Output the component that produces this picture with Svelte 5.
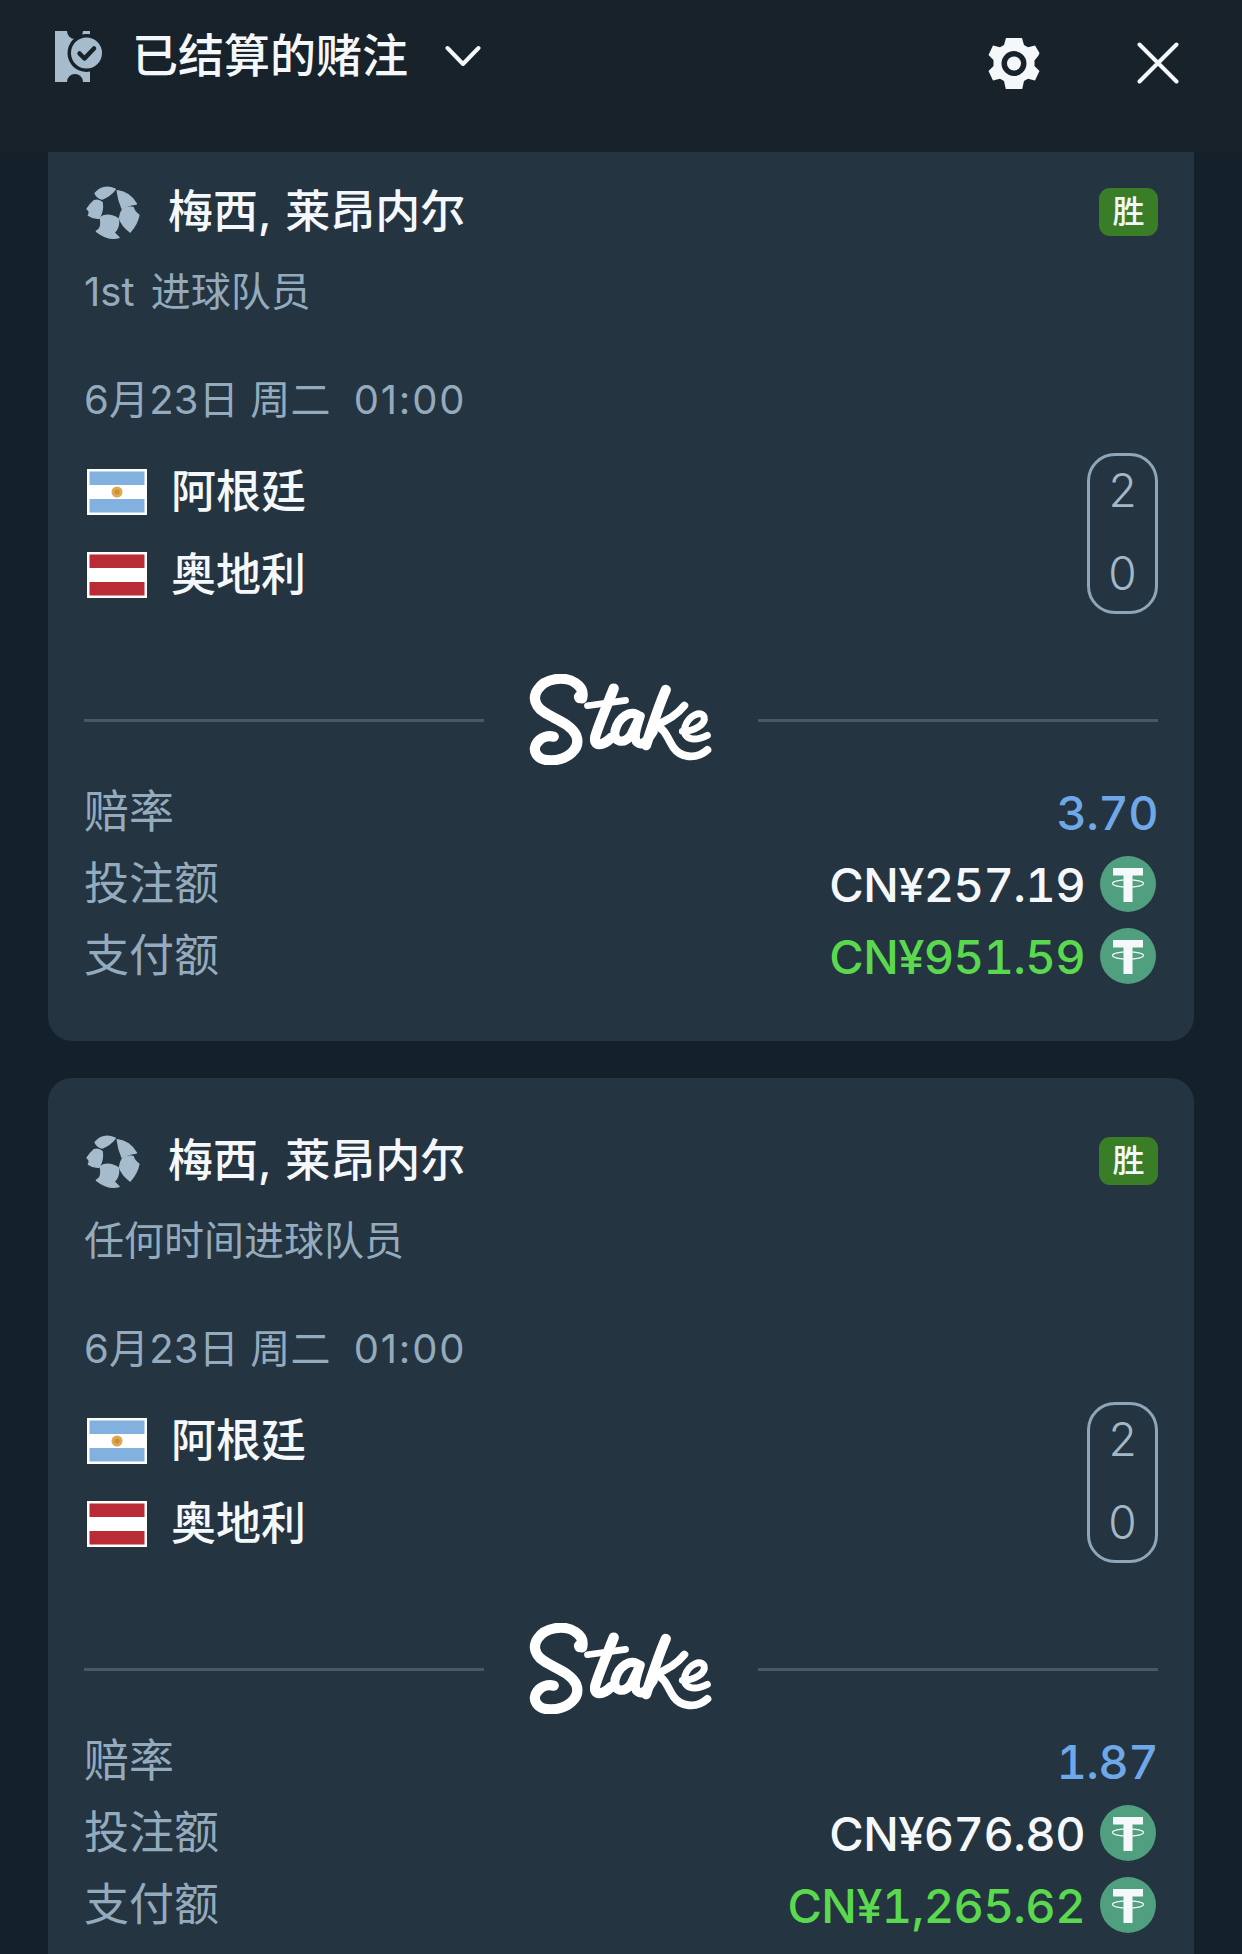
<script lang="ts">
  // 已结算的赌注 slide-over, two settled bets
  const bets = [
    { market: "1st 进球队员", odds: "3.70", stake: "CN¥257.19", payout: "CN¥951.59" },
    { market: "任何时间进球队员", odds: "1.87", stake: "CN¥676.80", payout: "CN¥1,265.62" }
  ];
</script>

{#snippet tether()}
  <svg class="coin" viewBox="0 0 56 56" aria-hidden="true">
    <circle cx="28" cy="28" r="28" fill="#50a07f" />
    <path d="M13 12h30v7.500H32.500V46h-9V19.500H13z" fill="#f5f8fa" />
    <ellipse cx="28" cy="27.500" rx="15.500" ry="3.600" fill="none" stroke="#f5f8fa" stroke-width="1.200" />
  </svg>
{/snippet}

{#snippet logo()}
  <svg class="logo" viewBox="178 76 552 276" aria-label="Stake">
    <g fill="none" stroke="#fff" stroke-linecap="round" stroke-linejoin="round">
      <path stroke-width="31" d="M336 150C346 110 300 84 254 92C206 100 180 140 200 172C220 206 296 216 318 262C334 304 290 338 240 338C198 338 182 306 200 284C212 268 232 262 250 266" />
      <circle cx="330" cy="146" r="19" fill="#fff" stroke="none" />
      <path stroke-width="20" d="M352 172L468 156" />
      <path stroke-width="31" d="M432 120C412 170 384 236 376 266C370 296 398 296 424 270" />
      <path stroke-width="28" d="M510 205C484 180 446 208 436 248C430 284 462 290 484 262L512 204C500 240 490 272 504 284C518 296 536 276 552 250" />
      <path stroke-width="31" d="M590 124C570 170 548 236 530 292" />
      <path stroke-width="24" d="M646 172C620 205 590 220 556 232C590 240 596 276 614 300C634 328 680 338 716 306" />
      <path stroke-width="21" d="M640 250C676 250 712 228 706 206C698 186 660 200 648 236C640 272 672 284 716 262" />
    </g>
  </svg>
{/snippet}

<div class="page">
  <header class="top">
    <div class="title">
      <svg class="ticket" viewBox="0 0 48 51" aria-hidden="true">
        <path d="M0 0h12a8 8 0 0 0 16 0h7v51h-7a8 8 0 0 0-16 0H0z" fill="#a6bccc" />
        <circle cx="31.500" cy="22" r="19" fill="#17222b" />
        <circle cx="31.500" cy="22" r="15.500" fill="#a6bccc" />
        <path d="M24.500 22.500l5 5 9.500-10" fill="none" stroke="#17222b" stroke-width="4.500" stroke-linecap="round" stroke-linejoin="round" />
      </svg>
      <span class="title-text">已结算的赌注</span>
      <svg class="chevron" viewBox="0 0 36 22" aria-hidden="true">
        <path d="M2.500 3l15.500 16L33.500 3" fill="none" stroke="#f5f8fa" stroke-width="4" stroke-linecap="round" stroke-linejoin="round" />
      </svg>
    </div>
    <div class="actions">
      <svg class="gear" viewBox="0 0 52 52" aria-hidden="true">
        <path fill-rule="evenodd" fill="#f5f8fa" d="M18 1h16l2 7 4 2.300 7-1.800 4.500 7.500-1 2.500-4 5v5.500l5 5-4.500 9.500-7-1.800-4 2.300-2 9H18l-2-9-4-2.300-7 1.800L.5 34l5-5v-6l-5-5L5 8.500l7 1.800L16 8zM26 14a12.500 12.500 0 1 0 0 25 12.500 12.500 0 0 0 0-25z" />
        <circle cx="26" cy="26.500" r="7" fill="#f5f8fa" />
      </svg>
      <svg class="close" viewBox="0 0 42 42" aria-hidden="true">
        <path d="M2.500 2.500l37 37M39.500 2.500l-37 37" stroke="#f5f8fa" stroke-width="4" stroke-linecap="round" />
      </svg>
    </div>
  </header>

  <div class="list">
    {#each bets as bet}
      <section class="card">
        <div class="player-row">
          <svg class="ball" viewBox="14 8 174 180" aria-hidden="true">
            <g fill="#a6bccc" stroke="#a6bccc" stroke-width="5" stroke-linejoin="round">
              <path d="M44 38Q70 8 108 25Q92 46 66 56Q50 52 44 38z" />
              <path d="M115 30Q155 35 176 72Q152 74 130 86Q118 58 115 30z" />
              <path d="M132 90Q150 78 166 84Q168 96 184 108Q178 138 156 162Q130 142 122 118Q124 102 132 90z" />
              <path d="M60 116Q86 100 118 120Q122 148 104 164L120 180Q86 190 48 160Q68 150 60 116z" />
              <path d="M40 62Q54 56 66 68Q70 94 56 118Q38 120 22 108Q30 98 18 88Q26 74 40 62z" />
            </g>
          </svg>
          <span class="player">梅西, 莱昂内尔</span>
          <span class="badge">胜</span>
        </div>
        <div class="market">{bet.market}</div>
        <div class="date"><span class="day">6月23日 周二</span><span class="time">01:00</span></div>

        <div class="match">
          <div class="teams">
            <div class="team">
              <svg class="flag" viewBox="0 0 60 46" aria-hidden="true">
                <rect width="60" height="46" fill="#fff" />
                <rect x="2.500" y="2.500" width="55" height="13.500" fill="#82b0df" />
                <rect x="2.500" y="30" width="55" height="13.500" fill="#82b0df" />
                <circle cx="30" cy="23" r="5.500" fill="#dfa84f" />
                <circle cx="30" cy="23" r="2.500" fill="#c98f3a" />
              </svg>
              <span class="team-name">阿根廷</span>
            </div>
            <div class="team">
              <svg class="flag" viewBox="0 0 60 46" aria-hidden="true">
                <rect width="60" height="46" fill="#fff" />
                <rect x="2.500" y="2.500" width="55" height="13.500" fill="#b92b35" />
                <rect x="2.500" y="30" width="55" height="13.500" fill="#b92b35" />
              </svg>
              <span class="team-name">奥地利</span>
            </div>
          </div>
          <div class="score"><span>2</span><span>0</span></div>
        </div>

        <div class="brand">
          <span class="rule"></span>
          {@render logo()}
          <span class="rule"></span>
        </div>

        <div class="line">
          <span class="label">赔率</span>
          <span class="value odds">{bet.odds}</span>
        </div>
        <div class="line">
          <span class="label">投注额</span>
          <span class="value">{bet.stake}{@render tether()}</span>
        </div>
        <div class="line">
          <span class="label">支付额</span>
          <span class="value payout">{bet.payout}{@render tether()}</span>
        </div>
      </section>
    {/each}
  </div>
</div>

<style>
  :global(body) {
    margin: 0;
    background: #14202a;
  }

  .page {
    width: 1242px;
    height: 1954px;
    overflow: hidden;
    background: #14202a;
    font-family: "Inter", "Noto Sans CJK SC", sans-serif;
    color: #f5f8fa;
  }

  .top {
    position: relative;
    z-index: 2;
    height: 152px;
    box-sizing: border-box;
    padding: 31px 63px 0 55px;
    display: flex;
    justify-content: space-between;
    align-items: flex-start;
    background: #17222b;
  }

  .title {
    display: flex;
    align-items: center;
    height: 51px;
  }

  .ticket {
    width: 48px;
    height: 51px;
  }

  .title-text {
    margin-left: 29px;
    font-size: 46px;
    font-weight: 500;
    line-height: 46px;
    position: relative;
    top: -2px;
  }

  .chevron {
    width: 36px;
    height: 22px;
    margin-left: 37px;
    margin-top: -1px;
  }

  .actions {
    display: flex;
    align-items: center;
    gap: 97px;
    padding-top: 6px;
  }

  .gear {
    width: 52px;
    height: 52px;
  }

  .close {
    width: 42px;
    height: 42px;
  }

  .list {
    margin-top: -23px;
    padding: 0 48px;
    display: flex;
    flex-direction: column;
    gap: 37px;
  }

  .card {
    background: #253441;
    border-radius: 24px;
    padding: 56px 36px 49px;
  }

  .player-row {
    display: flex;
    align-items: center;
    height: 54px;
  }

  .ball {
    width: 56px;
    height: 56px;
    margin-left: 1px;
    flex: none;
  }

  .player {
    margin-left: 27px;
    font-size: 45px;
    font-weight: 500;
    line-height: 54px;
    word-spacing: 2px;
  }

  .badge {
    margin-left: auto;
    width: 59px;
    height: 48px;
    border-radius: 11px;
    background: #3a7d27;
    font-size: 32px;
    font-weight: 500;
    line-height: 48px;
    text-align: center;
  }

  .market {
    margin-top: 28px;
    font-size: 40px;
    line-height: 50px;
    word-spacing: 5px;
    color: #93abbc;
  }

  .date {
    margin-top: 58px;
    display: flex;
    gap: 23px;
    font-size: 40px;
    line-height: 50px;
    color: #93abbc;
  }

  .day {
    letter-spacing: 0.2px;
  }

  .time {
    letter-spacing: 1.8px;
  }

  .match {
    margin-top: 28px;
    display: flex;
    justify-content: space-between;
    align-items: center;
  }

  .teams {
    display: flex;
    flex-direction: column;
    gap: 37px;
  }

  .team {
    display: flex;
    align-items: center;
    gap: 24px;
    height: 46px;
    padding-left: 3px;
    font-size: 45px;
    font-weight: 500;
  }

  .team-name {
    margin-bottom: 7px;
  }

  .flag {
    width: 60px;
    height: 46px;
  }

  .score {
    box-sizing: border-box;
    width: 71px;
    height: 161px;
    padding: 11px 0;
    border: 3px solid #8ea6b7;
    border-radius: 28px;
    display: flex;
    flex-direction: column;
    align-items: center;
    gap: 37px;
    font-size: 46px;
    font-weight: 300;
    line-height: 46px;
    color: #a3b8c7;
  }

  .brand {
    margin-top: 60px;
    display: flex;
    align-items: center;
    justify-content: space-between;
  }

  .rule {
    width: 400px;
    height: 3px;
    margin-top: 2px;
    background: #485866;
  }

  .logo {
    width: 184px;
    height: 91px;
  }

  .line {
    height: 72px;
    display: flex;
    align-items: center;
    justify-content: space-between;
    font-size: 45px;
  }

  .brand + .line {
    margin-top: 11px;
  }

  .label {
    margin-bottom: 8px;
    color: #93abbc;
  }

  .value {
    display: flex;
    align-items: center;
    gap: 15px;
    font-size: 47px;
    font-weight: 500;
    letter-spacing: -0.6px;
    font-variant-numeric: tabular-nums;
  }

  .odds {
    color: #6ea8e8;
  }

  .payout {
    color: #5ad84e;
  }

  .coin {
    width: 56px;
    height: 56px;
    margin-right: 2px;
  }
</style>
